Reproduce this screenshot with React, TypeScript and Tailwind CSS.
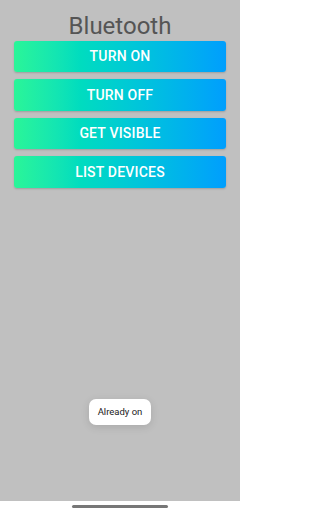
import React from "react";

const actions = ["TURN ON", "TURN OFF", "GET VISIBLE", "LIST DEVICES"];

export default function App() {
  return (
    <div
      className="relative flex h-[512px] w-[240px] flex-col overflow-hidden bg-[#c0c0c0]"
      style={{ fontFamily: "Roboto, 'Liberation Sans', sans-serif" }}
    >
      <main className="flex flex-1 flex-col px-[14px] pt-[12px]">
        <h1 className="text-center text-[24px] leading-[28px] font-normal text-[#555555]">
          Bluetooth
        </h1>
        <div className="mt-[0.5px] flex flex-col gap-[7px]">
          {actions.map((label) => (
            <button
              key={label}
              className="flex h-[31.5px] w-full items-center justify-center rounded-[3px] bg-gradient-to-r from-[#2af598] to-[#009efd] pt-[1px] text-[14px] font-medium tracking-[0.2px] text-white shadow-[0_1px_2px_rgba(0,0,0,0.18)]"
            >
              {label}
            </button>
          ))}
        </div>
      </main>

      {/* toast */}
      <div className="absolute top-[399px] left-[89px] flex h-[26px] w-[62px] items-center justify-center rounded-[7px] bg-white text-[9.5px] text-[#222222] shadow-[0_2px_8px_rgba(0,0,0,0.12)]">
        Already on
      </div>

      <div className="flex h-[11px] items-start justify-center bg-white pt-[4px]">
        <div className="h-[2.5px] w-[96px] rounded-full bg-[#777777]" />
      </div>
    </div>
  );
}
